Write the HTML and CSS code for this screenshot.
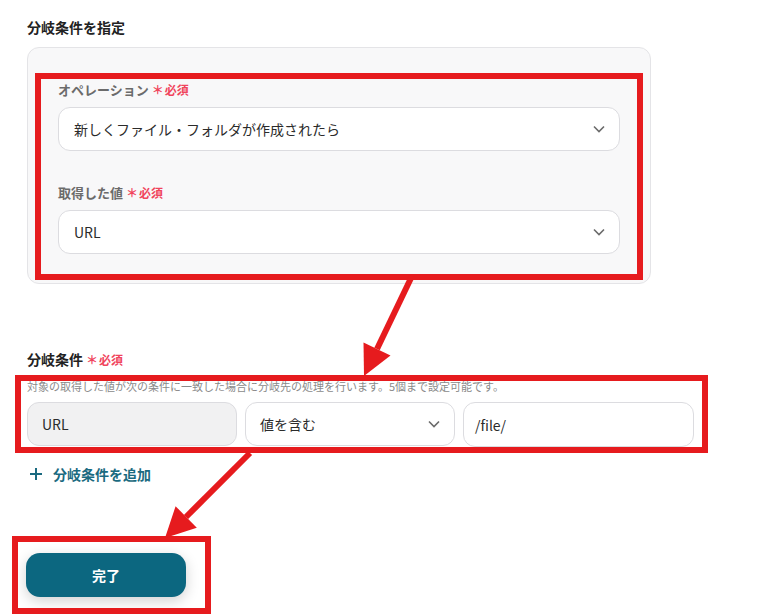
FILE: index.html
```html
<!DOCTYPE html>
<html lang="ja">
<head>
  <meta charset="UTF-8" />
  <title>分岐条件を指定</title>
  <link rel="stylesheet" href="styles.css">
</head>
<body>

  <div class="page">
    <h2 class="titulo">分岐条件を指定</h2>

    <div class="card">
      <label class="campo-label">オペレーション <span class="req">＊</span><span class="req-txt">必須</span></label>
      <div class="select">
        <span>新しくファイル・フォルダが作成されたら</span>
        <svg class="chevron" width="12" height="8" viewBox="0 0 12 8"><polyline points="1,1.5 6,6.5 11,1.5" fill="none" stroke="#6b6b6b" stroke-width="1.6" /></svg>
      </div>

      <label class="campo-label segundo">取得した値 <span class="req">＊</span><span class="req-txt">必須</span></label>
      <div class="select">
        <span>URL</span>
        <svg class="chevron" width="12" height="8" viewBox="0 0 12 8"><polyline points="1,1.5 6,6.5 11,1.5" fill="none" stroke="#6b6b6b" stroke-width="1.6" /></svg>
      </div>
    </div>

    <label class="secao-label">分岐条件 <span class="req">＊</span><span class="req-txt">必須</span></label>
    <p class="ajuda">対象の取得した値が次の条件に一致した場合に分岐先の処理を行います。5個まで設定可能です。</p>

    <div class="linha">
      <div class="campo fixo">URL</div>
      <div class="campo select-mini">
        <span>値を含む</span>
        <svg class="chevron" width="12" height="8" viewBox="0 0 12 8"><polyline points="1,1.5 6,6.5 11,1.5" fill="none" stroke="#6b6b6b" stroke-width="1.6" /></svg>
      </div>
      <div class="campo texto">/file/</div>
    </div>

    <a class="adicionar" href="#">
      <svg width="12" height="12" viewBox="0 0 12 12"><path d="M6 0v12M0 6h12" stroke="#1a6a80" stroke-width="2" /></svg>
      分岐条件を追加
    </a>

    <button class="concluir" type="button">完了</button>

    <!-- marcações vermelhas por cima do formulário -->
    <svg class="marcas" width="760" height="614" viewBox="0 0 760 614">
      <g fill="none" stroke="#e61b1e" stroke-width="6">
        <rect x="38" y="76" width="602" height="201" />
        <rect x="18" y="378" width="687" height="72" />
        <rect x="15" y="539" width="193" height="72" />
        <line x1="412" y1="276" x2="377" y2="349" />
        <line x1="250" y1="453" x2="186" y2="517" />
      </g>
      <g fill="#e61b1e">
        <polygon points="364,376 390.5,355.5 363.5,342.5" />
        <polygon points="165,538 196.8,527.8 175.6,506.2" />
      </g>
    </svg>
  </div>

</body>
</html>
```

FILE: styles.css
```css
body {
  margin: 0;
  font-family: "Noto Sans CJK JP", "Noto Sans", sans-serif;
  background-color: #ffffff;
  color: #2b2b2b;
}

.page {
  position: relative;
  width: 760px;
  height: 614px;
  padding: 17px 0 0 27px;
  box-sizing: border-box;
  overflow: hidden;
}

.titulo {
  margin: 0;
  height: 20px;
  font-size: 14px;
  line-height: 20px;
  font-weight: 700;
  color: #222;
}

.card {
  margin-top: 10px;
  width: 624px;
  box-sizing: border-box;
  padding: 31px 30px 29px;
  background: #f8f8f9;
  border: 1px solid #e4e4e7;
  border-radius: 12px;
}

.campo-label {
  display: flex;
  align-items: center;
  height: 20px;
  font-size: 13px;
  font-weight: 700;
  color: #6b6b6b;
}

.campo-label.segundo {
  margin-top: 31px;
}

.req {
  margin-left: 3px;
  color: #f0445c;
  font-size: 12px;
  font-weight: 700;
}

.req-txt {
  color: #f0445c;
  font-size: 12px;
  font-weight: 700;
  margin-left: 1px;
}

.select {
  margin-top: 8px;
  height: 44px;
  box-sizing: border-box;
  display: flex;
  align-items: center;
  justify-content: space-between;
  padding: 0 14px 0 15px;
  background: #fff;
  border: 1px solid #dcdce0;
  border-radius: 12px;
  font-size: 14px;
  color: #2b2b2b;
}

.secao-label {
  display: flex;
  align-items: center;
  height: 20px;
  margin-top: 65px;
  font-size: 14px;
  font-weight: 700;
  color: #222;
}

.ajuda {
  margin: 10px 0 0;
  height: 14px;
  font-size: 11px;
  line-height: 14px;
  color: #8a8a8a;
}

.linha {
  margin-top: 9px;
  display: grid;
  grid-template-columns: 210px 210px 231px;
  gap: 8px;
}

.campo {
  height: 44px;
  box-sizing: border-box;
  display: flex;
  align-items: center;
  padding: 0 14px;
  border: 1px solid #dcdce0;
  border-radius: 12px;
  font-size: 14px;
  color: #2b2b2b;
}

.campo.fixo {
  background: #f1f1f2;
}

.campo.select-mini {
  justify-content: space-between;
  background: #fff;
}

.campo.texto {
  padding-left: 11px;
  background: #fff;
  height: 45px;
}

.adicionar {
  margin-top: 17px;
  display: flex;
  align-items: center;
  gap: 11px;
  height: 20px;
  padding-left: 3px;
  font-size: 14px;
  font-weight: 700;
  color: #1a6a80;
  text-decoration: none;
}

.concluir {
  display: block;
  margin-top: 69px;
  margin-left: -1px;
  width: 160px;
  height: 44px;
  border: none;
  border-radius: 14px;
  background-color: #0c6780;
  color: #fff;
  font-family: inherit;
  font-size: 14px;
  font-weight: 700;
  box-shadow: 0 4px 14px rgba(0, 0, 0, 0.18);
  cursor: pointer;
}

.marcas {
  position: absolute;
  left: 0;
  top: 0;
  pointer-events: none;
}
```
